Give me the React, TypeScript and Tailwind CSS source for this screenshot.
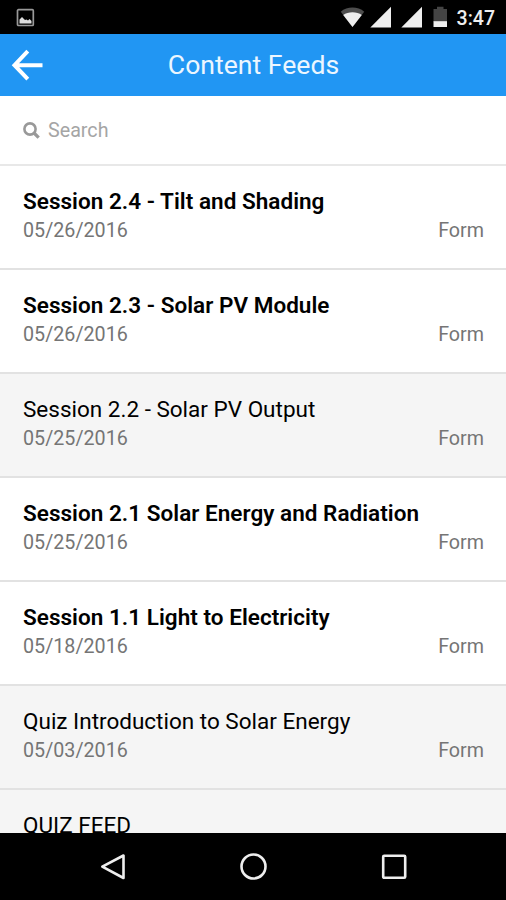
interface Feed {
    title: string;
    date?: string;
    unread: boolean;
}

const feeds: Feed[] = [
    {title: "Session 2.4 - Tilt and Shading", date: "05/26/2016", unread: true},
    {title: "Session 2.3 - Solar PV Module", date: "05/26/2016", unread: true},
    {title: "Session 2.2 - Solar PV Output", date: "05/25/2016", unread: false},
    {title: "Session 2.1 Solar Energy and Radiation", date: "05/25/2016", unread: true},
    {title: "Session 1.1 Light to Electricity", date: "05/18/2016", unread: true},
    {title: "Quiz Introduction to Solar Energy", date: "05/03/2016", unread: false},
    {title: "QUIZ FEED", unread: false},
];

const SignalIcon = () => (
    <svg width="22" height="22" viewBox="0 0 22 22">
        <path d="M21 0.8V21.5H0.3Z" fill="#eee"/>
    </svg>
);

const StatusBar = () => (
    <div className="flex h-[34px] shrink-0 items-center justify-between bg-black pl-4 pr-[11px]">
        <svg width="19" height="19" viewBox="0 0 19 19" fill="none">
            <rect x="1.5" y="1.7" width="15.8" height="15.8" rx="1" stroke="#999" strokeWidth="1.7"/>
            <path d="M3.5 15.5V11.5L6 9L9 12L10.5 11.5L12 12.5L13.5 11L15.5 13V15.5Z" fill="#ddd"/>
        </svg>
        <div className="flex items-center">
            <svg className="mr-[5px]" width="25" height="22" viewBox="0 0 25 22">
                <path d="M0.8 5.8C7 0.2 18 0.2 24.2 5.8L12.5 21Z" fill="#4d4d4d"/>
                <path d="M3.2 9C8 5.4 17 5.4 21.8 9L12.5 21Z" fill="#eee"/>
            </svg>
            <SignalIcon/>
            <div className="w-[9px]"/>
            <SignalIcon/>
            <svg className="ml-[10px] mr-[9px]" width="15" height="22" viewBox="0 0 15 22">
                <path d="M0.5 3H4V0.8H10.5V3H14V16H0.5Z" fill="#444"/>
                <rect x="0.5" y="15.2" width="13.5" height="5.8" fill="#eee"/>
            </svg>
            <span className="pt-1 text-[19.5px] leading-none font-medium text-[#eee]">3:47</span>
        </div>
    </div>
);

const Header = () => (
    <div className="grid h-[62px] shrink-0 grid-cols-[60px_1fr_60px] items-center bg-[#2196f3]">
        <svg className="ml-[11px]" width="32" height="32" viewBox="0 0 32 32" fill="none" stroke="#fff" strokeWidth="4">
            <path d="M16.8 2.2L3.5 16.2L16.8 30.2M3 16.2H31.5"/>
        </svg>
        <h1 className="pl-px text-center text-[26.6px] leading-none text-[#ecf6ff]">Content Feeds</h1>
    </div>
);

const SearchBar = () => (
    <div className="flex h-[70px] shrink-0 items-center gap-2 border-b-2 border-[#e8e8e8] pl-[23px] text-[#a5a5a5]">
        <svg width="17" height="17" viewBox="0 0 17 17" fill="none" stroke="#999" strokeWidth="2.6">
            <circle cx="7" cy="7" r="5.6"/>
            <path d="M11 11L15.7 15.7" strokeWidth="3.2"/>
        </svg>
        <span className="pt-0.5 text-[19.7px] leading-none">Search</span>
    </div>
);

const FeedRow = ({title, date, unread}: Feed) => (
    <div
        className={`h-[104px] shrink-0 border-b-2 border-[#e2e2e2] pl-[23px] pr-[22px] pt-[21px] ${unread ? "bg-white" : "bg-[#f5f5f5]"}`}
    >
        <div className={`text-[22.5px] leading-[29px] whitespace-nowrap text-black ${unread ? "font-semibold tracking-[0.03px]" : "font-normal"}`}>
            {title}
        </div>
        {date && (
            <div className="flex justify-between text-[19.7px] leading-[30px] text-[#757575]">
                <span>{date}</span>
                <span>Form</span>
            </div>
        )}
    </div>
);

const NavBar = () => (
    <div className="flex h-[67px] shrink-0 items-center justify-center gap-[112.5px] bg-black">
        <svg width="28" height="28" viewBox="0 0 28 28" fill="none" stroke="#eee" strokeWidth="2.6">
            <path d="M24.5 2.5V25L3.3 13.7Z" strokeLinejoin="round"/>
        </svg>
        <svg width="28" height="28" viewBox="0 0 28 28" fill="none" stroke="#eee" strokeWidth="2.6">
            <circle cx="14.5" cy="13.5" r="12"/>
        </svg>
        <svg width="28" height="28" viewBox="0 0 28 28" fill="none" stroke="#eee" strokeWidth="2.6">
            <rect x="3.2" y="2.8" width="22" height="22" rx="1"/>
        </svg>
    </div>
);

export default function App() {
    return (
        <div className="flex h-[900px] w-[506px] flex-col overflow-hidden bg-white font-[Roboto,sans-serif]">
            <StatusBar/>
            <Header/>
            <SearchBar/>
            <div className="flex min-h-0 flex-1 flex-col overflow-hidden">
                {feeds.map((feed) => (
                    <FeedRow key={feed.title} {...feed}/>
                ))}
            </div>
            <NavBar/>
        </div>
    );
}
